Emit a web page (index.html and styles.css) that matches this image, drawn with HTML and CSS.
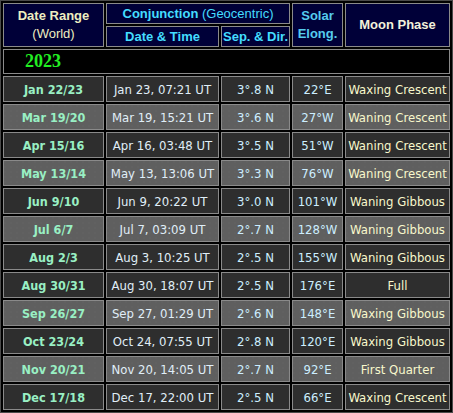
FILE: index.html
```html
<!DOCTYPE html>
<html>
<head>
<meta charset="utf-8">
<link rel="stylesheet" href="styles.css">
</head>
<body>
<div class="grid">
  <div class="h h-range"><b>Date Range</b><span>(World)</span></div>
  <div class="h h-conj"><b>Conjunction</b>&nbsp;<span>(Geocentric)</span></div>
  <div class="h h-solar"><b>Solar<br>Elong.</b></div>
  <div class="h h-phase"><b>Moon Phase</b></div>
  <div class="h h-sub"><b>Date &amp; Time</b></div>
  <div class="h h-sub"><b>Sep. &amp; Dir.</b></div>
  <div class="year">2023</div>

  <div class="c r">Jan 22/23</div><div class="c t">Jan 23, 07:21 UT</div><div class="c s">3°.8 N</div><div class="c e">22°E</div><div class="c p">Waxing Crescent</div>
  <div class="c r l">Mar 19/20</div><div class="c t l">Mar 19, 15:21 UT</div><div class="c s l">3°.6 N</div><div class="c e l">27°W</div><div class="c p l">Waning Crescent</div>
  <div class="c r">Apr 15/16</div><div class="c t">Apr 16, 03:48 UT</div><div class="c s">3°.5 N</div><div class="c e">51°W</div><div class="c p">Waning Crescent</div>
  <div class="c r l">May 13/14</div><div class="c t l">May 13, 13:06 UT</div><div class="c s l">3°.3 N</div><div class="c e l">76°W</div><div class="c p l">Waning Crescent</div>
  <div class="c r">Jun 9/10</div><div class="c t">Jun 9, 20:22 UT</div><div class="c s">3°.0 N</div><div class="c e">101°W</div><div class="c p">Waning Gibbous</div>
  <div class="c r l">Jul 6/7</div><div class="c t l">Jul 7, 03:09 UT</div><div class="c s l">2°.7 N</div><div class="c e l">128°W</div><div class="c p l">Waning Gibbous</div>
  <div class="c r">Aug 2/3</div><div class="c t">Aug 3, 10:25 UT</div><div class="c s">2°.5 N</div><div class="c e">155°W</div><div class="c p">Waning Gibbous</div>
  <div class="c r">Aug 30/31</div><div class="c t">Aug 30, 18:07 UT</div><div class="c s">2°.5 N</div><div class="c e">176°E</div><div class="c p">Full</div>
  <div class="c r l">Sep 26/27</div><div class="c t l">Sep 27, 01:29 UT</div><div class="c s l">2°.6 N</div><div class="c e l">148°E</div><div class="c p l">Waxing Gibbous</div>
  <div class="c r">Oct 23/24</div><div class="c t">Oct 24, 07:55 UT</div><div class="c s">2°.8 N</div><div class="c e">120°E</div><div class="c p">Waxing Gibbous</div>
  <div class="c r l">Nov 20/21</div><div class="c t l">Nov 20, 14:05 UT</div><div class="c s l">2°.7 N</div><div class="c e l">92°E</div><div class="c p l">First Quarter</div>
  <div class="c r">Dec 17/18</div><div class="c t">Dec 17, 22:00 UT</div><div class="c s">2°.5 N</div><div class="c e">66°E</div><div class="c p">Waxing Crescent</div>
</div>
</body>
</html>
```
FILE: styles.css
```css
html, body {
  margin: 0;
  padding: 0;
  background: #000;
}
.grid {
  display: grid;
  grid-template-columns: 101px 113px 69px 51px 105px;
  grid-template-rows: 21px 21px 25px repeat(12, 26px);
  gap: 2px;
  padding: 2px;
  border: 1px solid #4a4a4a;
  width: max-content;
  background: #000;
  font-family: "DejaVu Sans Condensed", "DejaVu Sans", sans-serif;
  font-size: 13px;
}
.grid > div {
  box-sizing: border-box;
  border: 1px solid #8a8a8a;
  display: flex;
  align-items: center;
  justify-content: center;
  white-space: nowrap;
}
.h {
  background: #000038;
  font-family: "Liberation Sans", Arial, sans-serif;
  font-size: 13px;
  text-align: center;
  line-height: 18px;
}
.h-range {
  grid-row: 1 / 3;
  flex-direction: column;
  color: #eeeec0;
}
.h-conj {
  grid-column: 2 / 4;
  color: #44ddff;
}
.h-solar {
  grid-column: 4;
  grid-row: 1 / 3;
  color: #55ccee;
}
.h-phase {
  grid-column: 5;
  grid-row: 1 / 3;
  color: #f2f2dc;
}
.h-sub {
  color: #44ddff;
}
.year {
  grid-column: 1 / 6;
  background: #000;
  justify-content: flex-start !important;
  padding-left: 21px;
  color: #22ee22;
  font-family: "Liberation Serif", "Times New Roman", serif;
  font-weight: bold;
  font-size: 18px;
}
.c {
  background: #2e2e2e;
  color: #e0eef8;
}
.c.l {
  background-color: #5f5f5f;
  background-image: radial-gradient(circle at 1px 1px, rgba(110,110,110,0.5) 0.5px, transparent 0.8px);
  background-size: 6px 5px;
}
.r {
  color: #99f0c4;
  font-weight: bold;
  font-size: 12.5px;
}
.s, .e {
  color: #cceeff;
}
.p {
  color: #f8f8cc;
}
```
